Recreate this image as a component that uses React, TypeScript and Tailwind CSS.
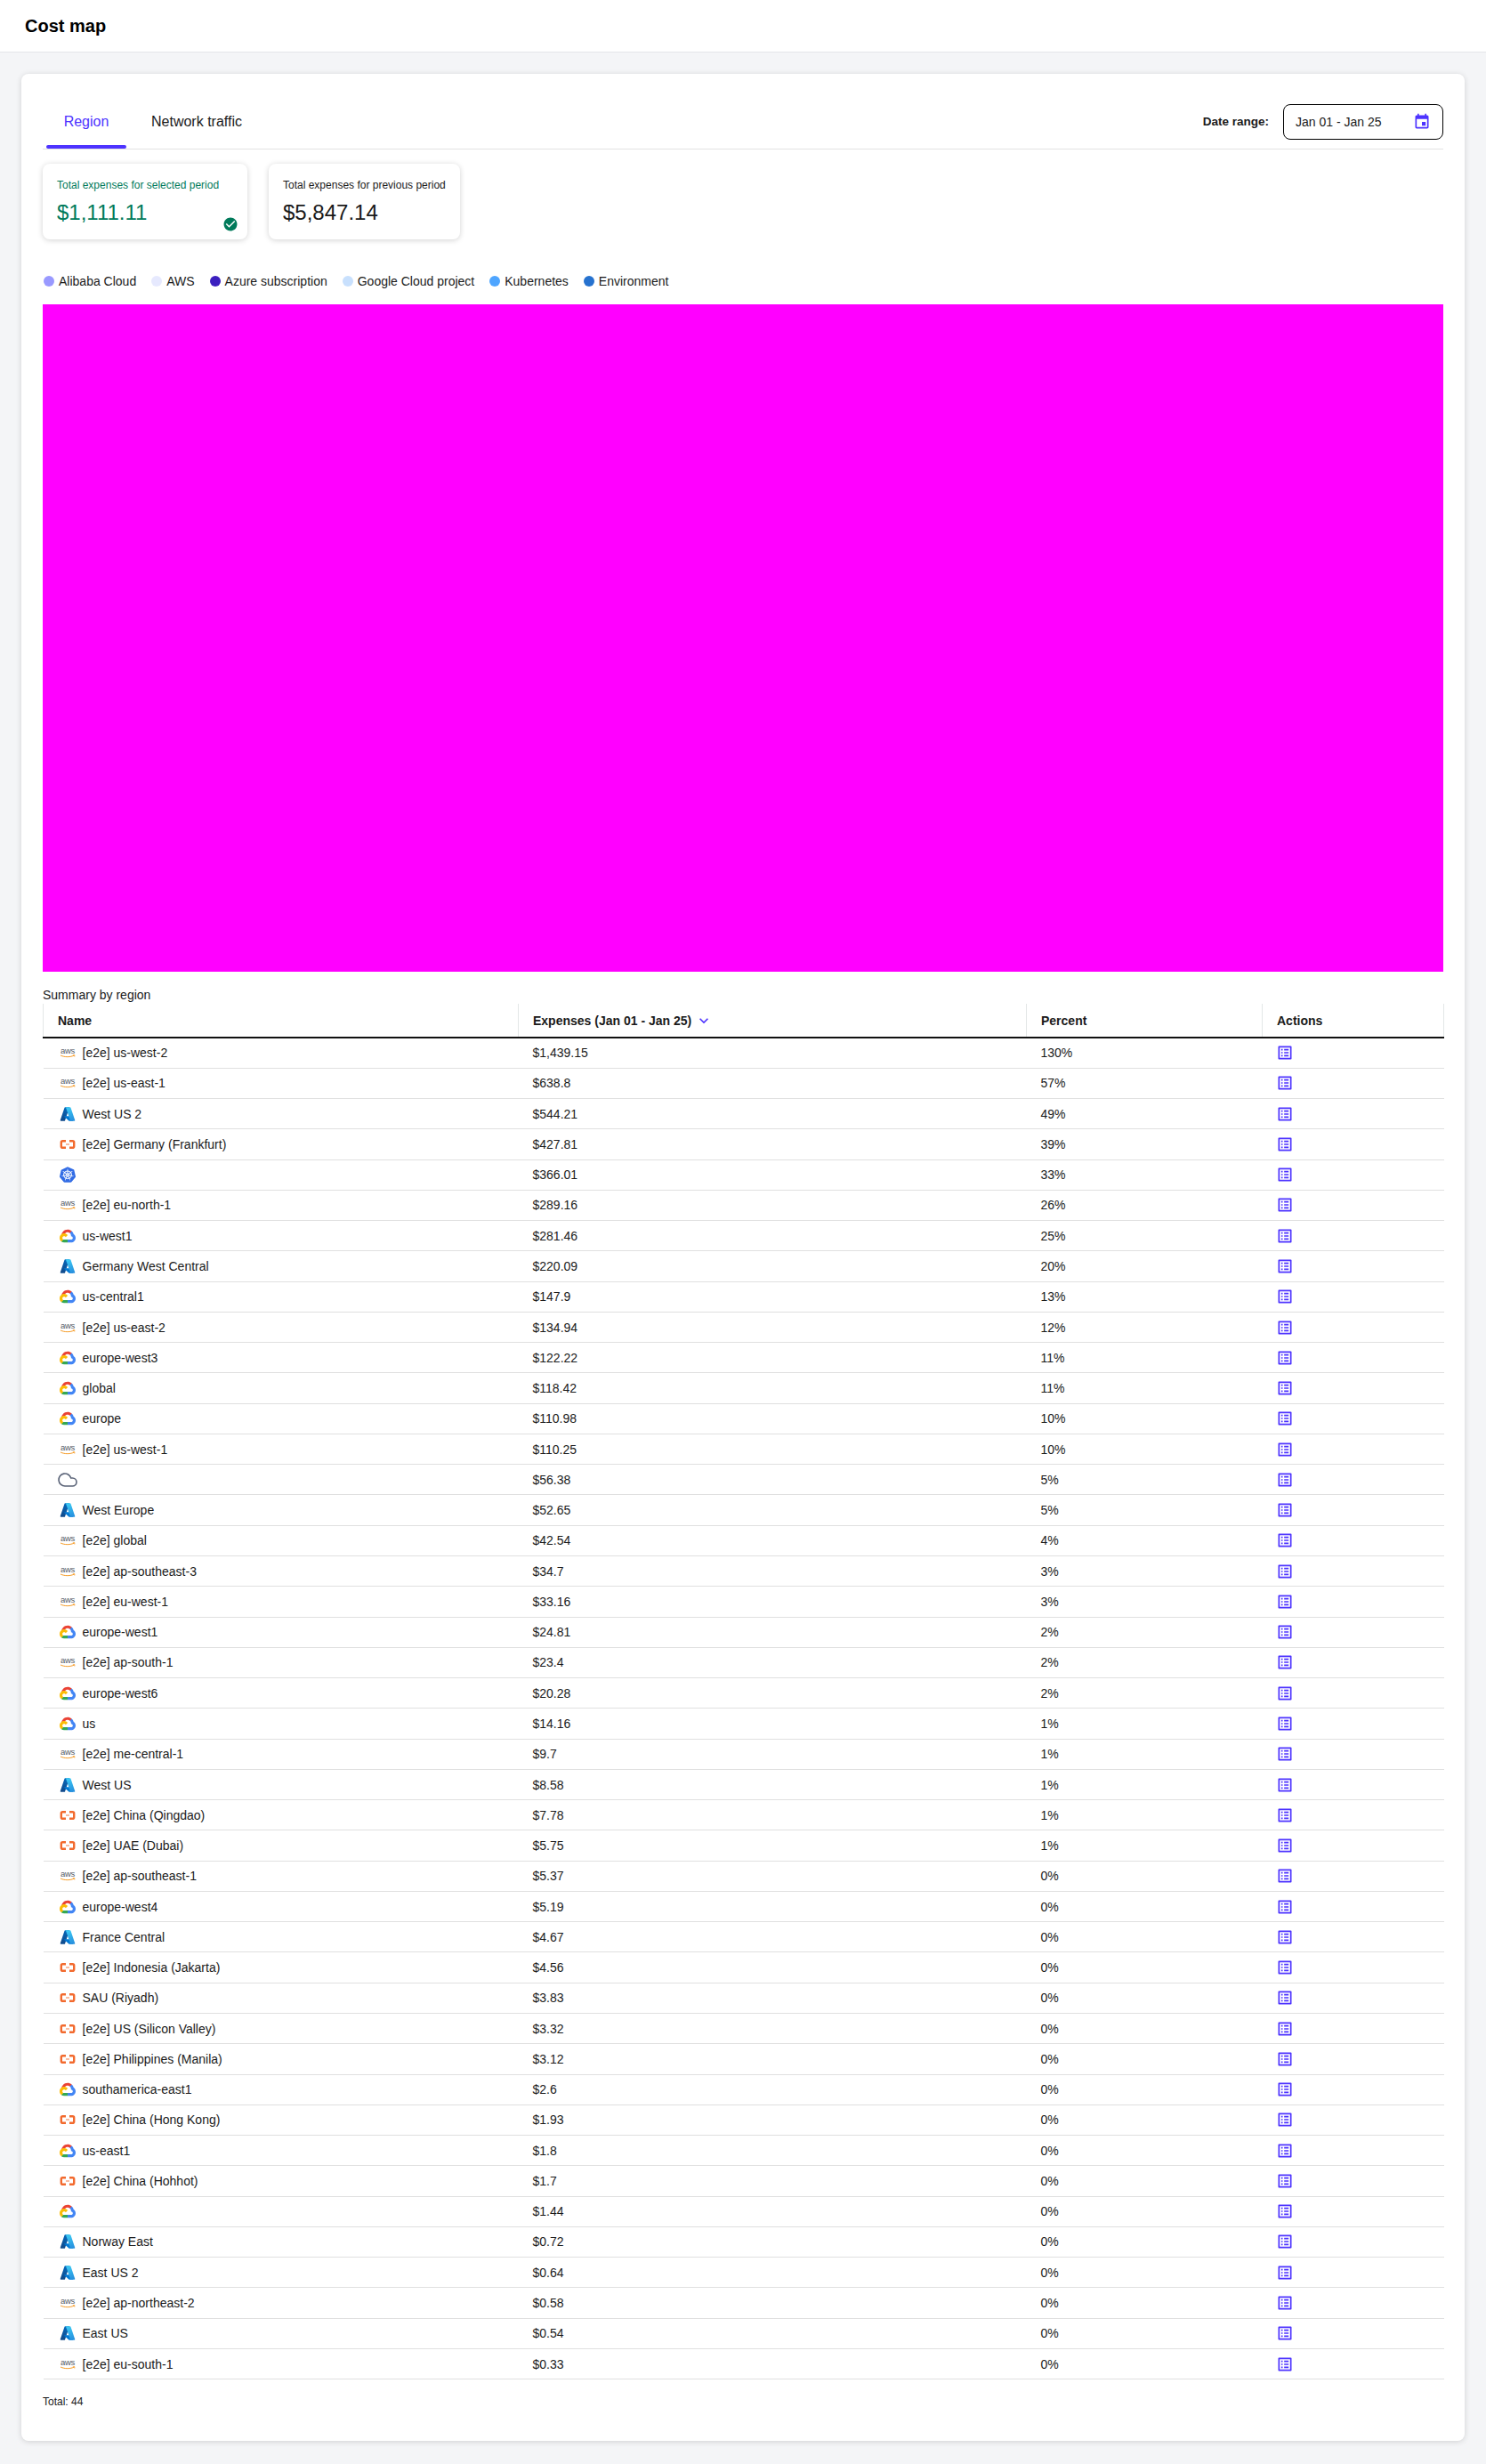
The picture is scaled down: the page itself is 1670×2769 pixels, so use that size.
import { useId } from 'react';
import { Cloud } from 'lucide-react';
import { SiKubernetes } from 'react-icons/si';

type Provider = 'aws' | 'azure' | 'ali' | 'k8s' | 'gcp' | 'cloud';

const rows: [Provider, string, string, string][] = [
    ['aws', '[e2e] us-west-2', '$1,439.15', '130%'],
    ['aws', '[e2e] us-east-1', '$638.8', '57%'],
    ['azure', 'West US 2', '$544.21', '49%'],
    ['ali', '[e2e] Germany (Frankfurt)', '$427.81', '39%'],
    ['k8s', '', '$366.01', '33%'],
    ['aws', '[e2e] eu-north-1', '$289.16', '26%'],
    ['gcp', 'us-west1', '$281.46', '25%'],
    ['azure', 'Germany West Central', '$220.09', '20%'],
    ['gcp', 'us-central1', '$147.9', '13%'],
    ['aws', '[e2e] us-east-2', '$134.94', '12%'],
    ['gcp', 'europe-west3', '$122.22', '11%'],
    ['gcp', 'global', '$118.42', '11%'],
    ['gcp', 'europe', '$110.98', '10%'],
    ['aws', '[e2e] us-west-1', '$110.25', '10%'],
    ['cloud', '', '$56.38', '5%'],
    ['azure', 'West Europe', '$52.65', '5%'],
    ['aws', '[e2e] global', '$42.54', '4%'],
    ['aws', '[e2e] ap-southeast-3', '$34.7', '3%'],
    ['aws', '[e2e] eu-west-1', '$33.16', '3%'],
    ['gcp', 'europe-west1', '$24.81', '2%'],
    ['aws', '[e2e] ap-south-1', '$23.4', '2%'],
    ['gcp', 'europe-west6', '$20.28', '2%'],
    ['gcp', 'us', '$14.16', '1%'],
    ['aws', '[e2e] me-central-1', '$9.7', '1%'],
    ['azure', 'West US', '$8.58', '1%'],
    ['ali', '[e2e] China (Qingdao)', '$7.78', '1%'],
    ['ali', '[e2e] UAE (Dubai)', '$5.75', '1%'],
    ['aws', '[e2e] ap-southeast-1', '$5.37', '0%'],
    ['gcp', 'europe-west4', '$5.19', '0%'],
    ['azure', 'France Central', '$4.67', '0%'],
    ['ali', '[e2e] Indonesia (Jakarta)', '$4.56', '0%'],
    ['ali', 'SAU (Riyadh)', '$3.83', '0%'],
    ['ali', '[e2e] US (Silicon Valley)', '$3.32', '0%'],
    ['ali', '[e2e] Philippines (Manila)', '$3.12', '0%'],
    ['gcp', 'southamerica-east1', '$2.6', '0%'],
    ['ali', '[e2e] China (Hong Kong)', '$1.93', '0%'],
    ['gcp', 'us-east1', '$1.8', '0%'],
    ['ali', '[e2e] China (Hohhot)', '$1.7', '0%'],
    ['gcp', '', '$1.44', '0%'],
    ['azure', 'Norway East', '$0.72', '0%'],
    ['azure', 'East US 2', '$0.64', '0%'],
    ['aws', '[e2e] ap-northeast-2', '$0.58', '0%'],
    ['azure', 'East US', '$0.54', '0%'],
    ['aws', '[e2e] eu-south-1', '$0.33', '0%'],
];

const legend = [
    { label: 'Alibaba Cloud', dot: 'bg-[#9999ff]' },
    { label: 'AWS', dot: 'bg-[#e6e9fe]' },
    { label: 'Azure subscription', dot: 'bg-[#3b1fbf]' },
    { label: 'Google Cloud project', dot: 'bg-[#c8e0fd]' },
    { label: 'Kubernetes', dot: 'bg-[#4ea5ff]' },
    { label: 'Environment', dot: 'bg-[#2672cf]' },
];

function AwsIcon() {
    return (
        <svg width="18" height="18" viewBox="0 0 18 18">
            <text x="9" y="10" textAnchor="middle" fontSize="9.5" fontFamily="'Liberation Sans', sans-serif" fill="#555b66" letterSpacing="-0.3">aws</text>
            <path d="M1 12c4.5 2.2 11 2.2 15.5 0" fill="none" stroke="#f59a23" strokeWidth="1" />
            <path d="M14.8 11.7h2v1.8" fill="none" stroke="#f59a23" strokeWidth="0.8" />
        </svg>
    );
}

function AzureIcon() {
    const id = useId();
    return (
        <svg width="18" height="18" viewBox="0 0 96 96">
            <defs>
                <linearGradient id={`${id}b`} x1="20" y1="88" x2="48" y2="8" gradientUnits="userSpaceOnUse">
                    <stop offset="0" stopColor="#114a8b" />
                    <stop offset="1" stopColor="#0669bc" />
                </linearGradient>
                <linearGradient id={`${id}c`} x1="48" y1="8" x2="76" y2="84" gradientUnits="userSpaceOnUse">
                    <stop offset="0" stopColor="#3ccbf4" />
                    <stop offset="1" stopColor="#2892df" />
                </linearGradient>
            </defs>
            <path d="M33.338 6.544h26.038l-27.03 80.087a4.152 4.152 0 0 1-3.933 2.824H8.149a4.145 4.145 0 0 1-3.928-5.47L29.404 9.368a4.152 4.152 0 0 1 3.934-2.825z" fill={`url(#${id}b)`} />
            <path d="M71.175 60.261h-41.29a1.911 1.911 0 0 0-1.305 3.309l26.532 24.764a4.171 4.171 0 0 0 2.846 1.121h23.38z" fill="#0078d4" />
            <path d="M66.595 9.364a4.145 4.145 0 0 0-3.928-2.82H33.648a4.146 4.146 0 0 1 3.928 2.82l25.184 74.62a4.146 4.146 0 0 1-3.928 5.472h29.02a4.146 4.146 0 0 0 3.927-5.472z" fill={`url(#${id}c)`} />
        </svg>
    );
}

function AlibabaIcon() {
    return (
        <svg width="18" height="18" viewBox="0 0 18 18">
            <path d="M7 5.2H3.4a1.6 1.6 0 0 0-1.6 1.6v4.4a1.6 1.6 0 0 0 1.6 1.6H7" fill="none" stroke="#f26a2e" strokeWidth="2.4" />
            <path d="M11 5.2h3.6a1.6 1.6 0 0 1 1.6 1.6v4.4a1.6 1.6 0 0 1-1.6 1.6H11" fill="none" stroke="#f26a2e" strokeWidth="2.4" />
            <path d="M7 9h4" stroke="#f26a2e" strokeWidth="0.9" />
        </svg>
    );
}

function GcpIcon() {
    return (
        <svg width="18" height="18" viewBox="0 -25 256 256">
            <path d="M170.2517,56.8186 L192.5047,34.5656 L193.9877,25.1956 C153.4367,-11.6774 88.9757,-7.4964 52.4207,33.9196 C42.2667,45.4226 34.7337,59.7636 30.7167,74.5726 L38.6867,73.4496 L83.1917,66.1106 L86.6277,62.5966 C106.4247,40.8546 139.8977,37.9296 162.7557,56.4286 L170.2517,56.8186 Z" fill="#EA4335" />
            <path d="M224.2048,73.9182 C219.0898,55.0822 208.5888,38.1492 193.9878,25.1962 L162.7558,56.4282 C175.9438,67.2042 183.4568,83.4382 183.1348,100.4612 L183.1348,106.0052 C198.4858,106.0052 210.9318,118.4502 210.9318,133.8012 C210.9318,149.1532 198.4858,161.2882 183.1348,161.2882 L127.4638,161.2882 L121.9978,167.2232 L121.9978,200.5632 L127.4638,205.7952 L183.1348,205.7952 C223.0648,206.1062 255.6868,174.3012 255.9978,134.3712 C256.1858,110.1682 244.2528,87.4782 224.2048,73.9182" fill="#4285F4" />
            <path d="M71.8704,205.7957 L127.4634,205.7957 L127.4634,161.2897 L71.8704,161.2897 C67.9094,161.2887 64.0734,160.4377 60.4714,158.7917 L52.5844,161.2117 L30.1754,183.4647 L28.2234,191.0387 C40.7904,200.5277 56.1234,205.8637 71.8704,205.7957" fill="#34A853" />
            <path d="M71.8704,61.4255 C31.9394,61.6635 -0.2366,94.2275 0.0014,134.1575 C0.1344,156.4555 10.5484,177.4455 28.2234,191.0385 L60.4714,158.7915 C46.4804,152.4705 40.2634,136.0055 46.5844,122.0155 C52.9044,108.0255 69.3704,101.8085 83.3594,108.1285 C89.5194,110.9125 94.4534,115.8465 97.2374,122.0155 L129.4844,89.7685 C115.7644,71.8315 94.4534,61.3445 71.8704,61.4255" fill="#FBBC05" />
        </svg>
    );
}

function ProviderIcon({ type }: { type: Provider }) {
    if (type === 'aws') return <AwsIcon />;
    if (type === 'azure') return <AzureIcon />;
    if (type === 'ali') return <AlibabaIcon />;
    if (type === 'gcp') return <GcpIcon />;
    if (type === 'k8s') return <SiKubernetes size={18} className="text-[#326ce5]" />;
    return <Cloud size={24} strokeWidth={1.6} className="text-[#5b6478] -mx-[3px]" />;
}

export default function App() {
    return (
        <div className="min-h-[2769px] bg-[#f4f5f7] font-['Liberation_Sans',sans-serif] text-[#1a1a1a]">
            {/* Header */}
            <header className="h-[59px] bg-white border-b border-[#e4e6e9] pl-7 flex items-center">
                <h1 className="text-xl font-bold text-black">Cost map</h1>
            </header>

            <main className="px-6 pt-6 pb-[26px]">
                <div className="bg-white rounded-lg shadow-[0_1px_6px_rgba(0,0,0,0.15)] px-6 pt-6 h-[2660px]">
                    {/* Tabs */}
                    <div className="h-[61px] border-b border-[#e3e3e3] flex items-end justify-between">
                        <div className="flex">
                            <div className="relative w-[90px] ml-1 h-[60px] flex items-center justify-center text-base text-[#4d33ff]">
                                Region
                                <span className="absolute bottom-0 inset-x-0 h-1 rounded-sm bg-[#4d33ff]" />
                            </div>
                            <div className="h-[60px] ml-7 flex items-center text-base text-[#1a1a1a]">Network traffic</div>
                        </div>
                        <div className="flex items-center gap-4 h-[40px] mb-[10px]">
                            <span className="text-[13.5px] font-bold">Date range:</span>
                            <div className="w-[180px] h-[40px] border border-black rounded-lg pl-[13px] pr-[13px] flex items-center justify-between text-sm">
                                Jan 01 - Jan 25
                                <svg width="20" height="20" viewBox="0 0 24 24" fill="#4d33ff">
                                    <path d="M17 12h-5v5h5v-5zM16 1v2H8V1H6v2H5c-1.11 0-1.99.9-1.99 2L3 19c0 1.1.89 2 2 2h14c1.1 0 2-.9 2-2V5c0-1.1-.9-2-2-2h-1V1h-2zm3 18H5V8h14v11z" />
                                </svg>
                            </div>
                        </div>
                    </div>

                    {/* Summary cards */}
                    <div className="flex gap-6 mt-4">
                        <div className="relative w-[230px] h-[85px] rounded-lg bg-white shadow-[0_1px_6px_rgba(0,0,0,0.18)] pl-4 pt-4">
                            <p className="text-xs text-[#007a5a]">Total expenses for selected period</p>
                            <p className="text-2xl mt-[7px] text-[#007a5a]">$1,111.11</p>
                            <svg className="absolute right-[10px] bottom-[8px]" width="18" height="18" viewBox="0 0 24 24" fill="#007a5a">
                                <path d="M12 2C6.48 2 2 6.48 2 12s4.48 10 10 10 10-4.48 10-10S17.52 2 12 2zm-2 15l-5-5 1.41-1.41L10 14.17l7.59-7.59L19 8l-9 9z" />
                            </svg>
                        </div>
                        <div className="w-[215px] h-[85px] rounded-lg bg-white shadow-[0_1px_6px_rgba(0,0,0,0.18)] pl-4 pt-4">
                            <p className="text-xs text-[#1a1a1a]">Total expenses for previous period</p>
                            <p className="text-2xl mt-[7px] text-[#1a1a1a]">$5,847.14</p>
                        </div>
                    </div>

                    {/* Legend */}
                    <div className="flex items-center gap-[17px] h-4 mt-[39px] ml-px text-sm">
                        {legend.map((item) => (
                            <div key={item.label} className="flex items-center gap-[5px]">
                                <span className={`w-3 h-3 rounded-full ${item.dot}`} />
                                {item.label}
                            </div>
                        ))}
                    </div>

                    {/* Chart area */}
                    <div className="h-[750px] mt-[18px] bg-[#ff00ff]" />

                    <p className="text-sm mt-[18px] h-4 leading-4">Summary by region</p>

                    {/* Table */}
                    <table className="w-[1574px] mt-[2px] table-fixed border-collapse text-sm">
                        <colgroup>
                            <col className="w-[534px]" />
                            <col className="w-[571px]" />
                            <col className="w-[265px]" />
                            <col className="w-[204px]" />
                        </colgroup>
                        <thead>
                            <tr className="h-[38px] border-b-2 border-[#111] text-left">
                                <th className="pl-4 font-bold border-l border-[#e3e7e7]">Name</th>
                                <th className="pl-4 font-bold border-l border-[#e3e7e7]">
                                    <span className="flex items-center gap-1">
                                        Expenses (Jan 01 - Jan 25)
                                        <svg width="20" height="20" viewBox="0 0 24 24" fill="#4d33ff">
                                            <path d="M7.41 8.59 12 13.17l4.59-4.58L18 10l-6 6-6-6z" />
                                        </svg>
                                    </span>
                                </th>
                                <th className="pl-4 font-bold border-l border-[#e3e7e7]">Percent</th>
                                <th className="pl-4 font-bold border-x border-[#e3e7e7]">Actions</th>
                            </tr>
                        </thead>
                        <tbody>
                            {rows.map(([type, name, cost, percent], i) => (
                                <tr key={i} className="h-[34.27px] border-b border-[#e0e0e0]">
                                    <td className="pl-[18px]">
                                        <div className="flex items-center gap-2">
                                            <ProviderIcon type={type} />
                                            {name}
                                        </div>
                                    </td>
                                    <td className="pl-4">{cost}</td>
                                    <td className="pl-4">{percent}</td>
                                    <td className="pl-[15px]">
                                        <svg className="block" width="20" height="20" viewBox="0 0 24 24" fill="#4d33ff">
                                            <path d="M11 7h6v2h-6zm0 4h6v2h-6zm0 4h6v2h-6zM7 7h2v2H7zm0 4h2v2H7zm0 4h2v2H7zM20.1 3H3.9c-.5 0-.9.4-.9.9v16.2c0 .4.4.9.9.9h16.2c.4 0 .9-.5.9-.9V3.9c0-.5-.5-.9-.9-.9zM19 19H5V5h14v14z" />
                                        </svg>
                                    </td>
                                </tr>
                            ))}
                        </tbody>
                    </table>

                    <p className="text-xs mt-[17px]">Total: 44</p>
                </div>
            </main>
        </div>
    );
}
